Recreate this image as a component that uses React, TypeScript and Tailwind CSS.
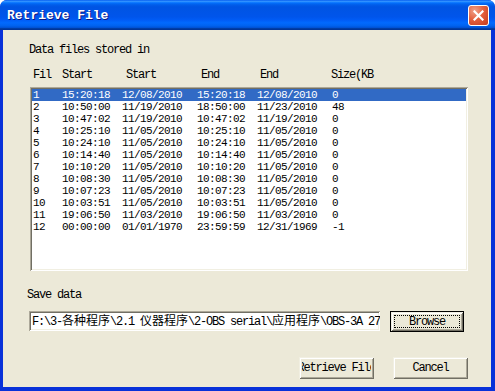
import React from "react";

const rows = [
  ["1", "15:20:18", "12/08/2010", "15:20:18", "12/08/2010", "0"],
  ["2", "10:50:00", "11/19/2010", "18:50:00", "11/23/2010", "48"],
  ["3", "10:47:02", "11/19/2010", "10:47:02", "11/19/2010", "0"],
  ["4", "10:25:10", "11/05/2010", "10:25:10", "11/05/2010", "0"],
  ["5", "10:24:10", "11/05/2010", "10:24:10", "11/05/2010", "0"],
  ["6", "10:14:40", "11/05/2010", "10:14:40", "11/05/2010", "0"],
  ["7", "10:10:20", "11/05/2010", "10:10:20", "11/05/2010", "0"],
  ["8", "10:08:30", "11/05/2010", "10:08:30", "11/05/2010", "0"],
  ["9", "10:07:23", "11/05/2010", "10:07:23", "11/05/2010", "0"],
  ["10", "10:03:51", "11/05/2010", "10:03:51", "11/05/2010", "0"],
  ["11", "19:06:50", "11/03/2010", "19:06:50", "11/03/2010", "0"],
  ["12", "00:00:00", "01/01/1970", "23:59:59", "12/31/1969", "-1"],
];

const mono = "font-['Liberation_Mono','Noto_Sans_CJK_SC',monospace] text-[12px] leading-[12px] tracking-[-1.2px]";
const rowFont = "font-['Liberation_Mono',monospace] text-[11px] leading-[12px] tracking-[-0.6px]";
const cjk = "font-['Noto_Sans_CJK_SC',sans-serif] text-[12px] leading-[12px] tracking-normal";

const raised =
  "shadow-[inset_1px_1px_#f1efe2,inset_-1px_-1px_#716f64,inset_2px_2px_#ffffff,inset_-2px_-2px_#aca899]";
const sunken =
  "shadow-[inset_1px_1px_#aca899,inset_-1px_-1px_#ffffff,inset_2px_2px_#716f64,inset_-2px_-2px_#f1efe2]";

export default function App() {
  return (
    <div className="w-[495px] h-[391px] flex flex-col rounded-t-[7px] overflow-hidden bg-[#0831D9]">
      <div className="h-[30px] shrink-0 flex items-center bg-[linear-gradient(to_bottom,#0058EE_0%,#3593FF_4%,#288EFF_6%,#127DFF_8%,#036FFC_10%,#0262EE_14%,#0057E5_20%,#0054E3_24%,#0055EB_56%,#005BF5_66%,#026AFE_76%,#0062EF_86%,#0052D6_92%,#0040AB_94%,#003092_100%)]">
        <div className="pl-[7px] pt-[1px] text-white font-bold font-['Liberation_Mono',monospace] text-[13px] leading-[14px] [text-shadow:1px_1px_#0a1883]">
          Retrieve File
        </div>
        <div className="ml-auto mr-[6px] mt-[1px] w-[21px] h-[21px] rounded-[3px] border border-white bg-[radial-gradient(circle_at_30%_25%,#F0A18A_0%,#E4613F_45%,#C43A1C_100%)] flex items-center justify-center">
          <svg width="11" height="11" viewBox="0 0 11 11">
            <path d="M1.5 1.5 L9.5 9.5 M9.5 1.5 L1.5 9.5" stroke="white" strokeWidth="2.2" strokeLinecap="square" />
          </svg>
        </div>
      </div>
      <div className="flex-1 ml-[3px] mr-[4px] mb-[4px] bg-[#ECE9D8] flex flex-col text-black">
        <div className={`${mono} ml-[26px] mt-[14px]`}>Data files stored in</div>
        <div className={`${mono} ml-[30px] mt-[13px] flex`}>
          <div className="w-[29px]">Fil</div>
          <div className="w-[64px]">Start</div>
          <div className="w-[75px]">Start</div>
          <div className="w-[59px]">End</div>
          <div className="w-[71px]">End</div>
          <div className="whitespace-nowrap">Size(KB</div>
        </div>
        <div className={`ml-[27px] mt-[6px] w-[438px] h-[184px] bg-white p-[2px] ${sunken}`}>
          {rows.map((r, i) => (
            <div
              key={i}
              className={`${rowFont} h-[12px] flex pl-[1px] ${i === 0 ? "bg-[#316AC5] text-white" : ""}`}
            >
              <div className="w-[29px]">{r[0]}</div>
              <div className="w-[60px]">{r[1]}</div>
              <div className="w-[75px]">{r[2]}</div>
              <div className="w-[60px]">{r[3]}</div>
              <div className="w-[75px]">{r[4]}</div>
              <div>{r[5]}</div>
            </div>
          ))}
        </div>
        <div className={`${mono} ml-[24px] mt-[18px]`}>Save data</div>
        <div className="flex mt-[10px] ml-[26px] items-start">
          <div className={`w-[351px] h-[20px] bg-white ${sunken} overflow-hidden whitespace-nowrap pl-[3px] flex items-center`}>
            <span className={`${mono} whitespace-nowrap`}>
              F:\3-<span className={cjk}>各种程序</span>\2.1 <span className={cjk}>仪器程序</span>\2-OBS serial\<span className={cjk}>应用程序</span>\OBS-3A 27
            </span>
          </div>
          <div className="ml-[10px] w-[74px] h-[21px] border border-black bg-[#ECE9D8]">
            <div className={`w-full h-full ${raised} p-[3px]`}>
              <div className={`w-full h-full border border-dotted border-black flex items-center justify-center ${mono}`}>
                Browse
              </div>
            </div>
          </div>
        </div>
        <div className="flex mt-[25px] ml-[296px]">
          <div className={`w-[75px] h-[22px] ${raised} bg-[#ECE9D8] flex items-center justify-center`}>
            <div className="w-[69px] overflow-hidden flex justify-center">
              <span className={`${mono} whitespace-nowrap shrink-0 tracking-[-0.6px]`}>Retrieve File</span>
            </div>
          </div>
          <div className={`ml-[19px] w-[75px] h-[22px] ${raised} bg-[#ECE9D8] flex items-center justify-center`}>
            <span className={mono}>Cancel</span>
          </div>
        </div>
      </div>
    </div>
  );
}
